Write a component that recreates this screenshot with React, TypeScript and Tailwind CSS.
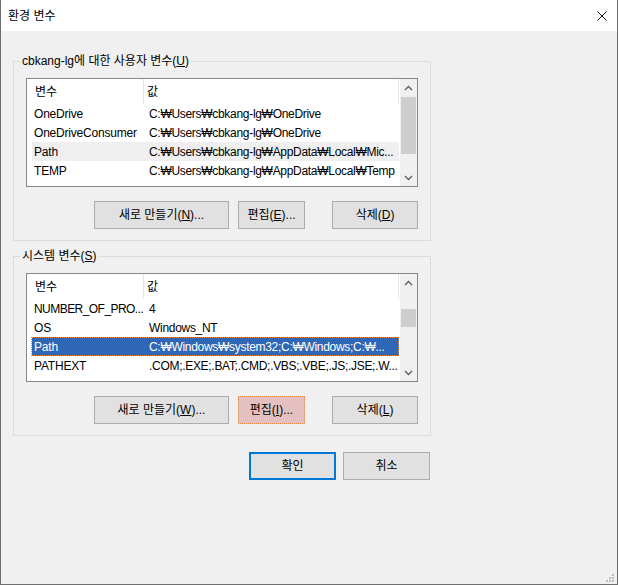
import React from "react";

type Row = { name: string; value: string; tight?: boolean };

const userVars: Row[] = [
  { name: "OneDrive", value: "C:₩Users₩cbkang-lg₩OneDrive" },
  { name: "OneDriveConsumer", value: "C:₩Users₩cbkang-lg₩OneDrive" },
  { name: "Path", value: "C:₩Users₩cbkang-lg₩AppData₩Local₩Mic..." },
  { name: "TEMP", value: "C:₩Users₩cbkang-lg₩AppData₩Local₩Temp" },
];

const sysVars: Row[] = [
  { name: "NUMBER_OF_PRO...", value: "4", tight: true },
  { name: "OS", value: "Windows_NT" },
  { name: "Path", value: "C:₩Windows₩system32;C:₩Windows;C:₩..." },
  { name: "PATHEXT", value: ".COM;.EXE;.BAT;.CMD;.VBS;.VBE;.JS;.JSE;.W..." },
];

function Chevron({ up }: { up?: boolean }) {
  return (
    <svg width="9" height="6" viewBox="0 0 9 6">
      <polyline
        points={up ? "1,5 4.5,1.5 8,5" : "1,1 4.5,4.5 8,1"}
        fill="none"
        stroke="#606060"
        strokeWidth="1.4"
      />
    </svg>
  );
}

function ListBox({
  rows,
  thumbTop,
  thumbHeight,
  selected,
  active,
}: {
  rows: Row[];
  thumbTop: string;
  thumbHeight: string;
  selected: number;
  active?: boolean;
}) {
  return (
    <div className="ml-[12px] w-[392px] h-[109px] border border-[#828790] bg-white flex overflow-hidden">
      <div className="w-[373px] h-[107px] overflow-hidden">
        {/* header */}
        <div className="flex h-[25px]">
          <div className="w-[117px] border-r border-[#e5e5e5] pl-[8px] flex items-center">변수</div>
          <div className="w-[255px] border-r border-[#e5e5e5] pl-[3px] flex items-center">값</div>
        </div>
        {rows.map((r, i) => {
          const isSel = i === selected;
          const bg = isSel ? (active ? "bg-[#2f66b5] text-white" : "bg-[#efefef]") : "";
          return (
            <div
              key={i}
              className={`relative ml-[5px] w-[367px] h-[19px] flex items-center whitespace-nowrap ${bg}`}
            >
              <div className={`w-[111px] shrink-0 pl-[2px] ${r.tight ? "tracking-[-0.55px]" : "tracking-[-0.2px]"}`}>
                {r.name}
              </div>
              <div className="flex-1 pl-[6px] overflow-hidden tracking-[-0.3px]">{r.value}</div>
              {isSel && active && (
                <span className="absolute -left-[1px] right-0 inset-y-0 border border-dotted border-[#f08a3a]" />
              )}
            </div>
          );
        })}
      </div>
      {/* scrollbar */}
      <div className="w-[17px] bg-[#f0f0f0] flex flex-col">
        <div className="h-[17px] flex items-center justify-center">
          <Chevron up />
        </div>
        <div className="flex-1">
          <div className={`mx-auto w-[15px] bg-[#cdcdcd] ${thumbTop} ${thumbHeight}`} />
        </div>
        <div className="h-[17px] flex items-center justify-center">
          <Chevron />
        </div>
      </div>
    </div>
  );
}

function Btn({
  children,
  className = "",
}: {
  children: React.ReactNode;
  className?: string;
}) {
  return (
    <div
      className={`h-[28px] flex items-center justify-center border bg-[#e1e1e1] border-[#adadad] ${className}`}
    >
      {children}
    </div>
  );
}

export default function App() {
  return (
    <div
      className="relative w-[618px] h-[585px] bg-[#f0f0f0] border-x border-b border-[#6e6e6e] flex flex-col text-[12px] text-black"
      style={{ fontFamily: "'Liberation Sans','Noto Sans CJK KR',sans-serif" }}
    >
      {/* Title bar */}
      <div className="h-[31px] bg-white flex items-center justify-between pl-[7px] pr-[10px] shrink-0">
        <span className="text-[12px]">환경 변수</span>
        <svg width="10" height="10" viewBox="0 0 10 10">
          <path d="M0.5 0.5 L9.5 9.5 M9.5 0.5 L0.5 9.5" stroke="#111" strokeWidth="1" />
        </svg>
      </div>

      <div className="pl-[12px]">
        {/* User variables */}
        <fieldset className="mt-[22px] w-[418px] border border-[#dcdcdc] pb-[11px]">
          <legend className="ml-[6px] px-[2px] leading-[16px]">
            cbkang-lg에 대한 사용자 변수(<span className="underline">U</span>)
          </legend>
          <div className="mt-[9px]">
            <ListBox rows={userVars} thumbTop="mt-[1px]" thumbHeight="h-[57px]" selected={2} />
          </div>
          <div className="mt-[14px] mr-[12px] flex justify-end">
            <Btn className="w-[135px]">
              새로 만들기(<span className="underline">N</span>)...
            </Btn>
            <Btn className="w-[67px] ml-[9px]">
              편집(<span className="underline">E</span>)...
            </Btn>
            <Btn className="w-[86px] ml-[27px]">
              삭제(<span className="underline">D</span>)
            </Btn>
          </div>
        </fieldset>

        {/* System variables */}
        <fieldset className="mt-[7px] w-[418px] border border-[#dcdcdc] pb-[11px]">
          <legend className="ml-[6px] px-[2px] leading-[16px]">
            시스템 변수(<span className="underline">S</span>)
          </legend>
          <div className="mt-[9px]">
            <ListBox rows={sysVars} thumbTop="mt-[18px]" thumbHeight="h-[18px]" selected={2} active />
          </div>
          <div className="mt-[14px] mr-[12px] flex justify-end">
            <Btn className="w-[135px]">
              새로 만들기(<span className="underline">W</span>)...
            </Btn>
            <Btn className="w-[67px] ml-[9px] !bg-[#e5c0c0] !border-dotted !border-[#e8853b]">
              편집(<span className="underline">I</span>)...
            </Btn>
            <Btn className="w-[86px] ml-[27px]">
              삭제(<span className="underline">L</span>)
            </Btn>
          </div>
        </fieldset>

        {/* OK / Cancel */}
        <div className="mt-[16px] w-[418px] pr-[1px] flex justify-end">
          <Btn className="w-[87px] !border-2 !border-[#0078d7]">확인</Btn>
          <Btn className="w-[87px] ml-[7px]">취소</Btn>
        </div>
      </div>

      {/* resize grip */}
      <svg className="absolute right-[3px] bottom-[2px]" width="8" height="8" viewBox="0 0 8 8">
        <rect x="6" y="0" width="2" height="2" fill="#bcbcbc" />
        <rect x="3" y="3" width="2" height="2" fill="#bcbcbc" />
        <rect x="6" y="3" width="2" height="2" fill="#bcbcbc" />
        <rect x="0" y="6" width="2" height="2" fill="#bcbcbc" />
        <rect x="3" y="6" width="2" height="2" fill="#bcbcbc" />
        <rect x="6" y="6" width="2" height="2" fill="#bcbcbc" />
      </svg>
    </div>
  );
}
